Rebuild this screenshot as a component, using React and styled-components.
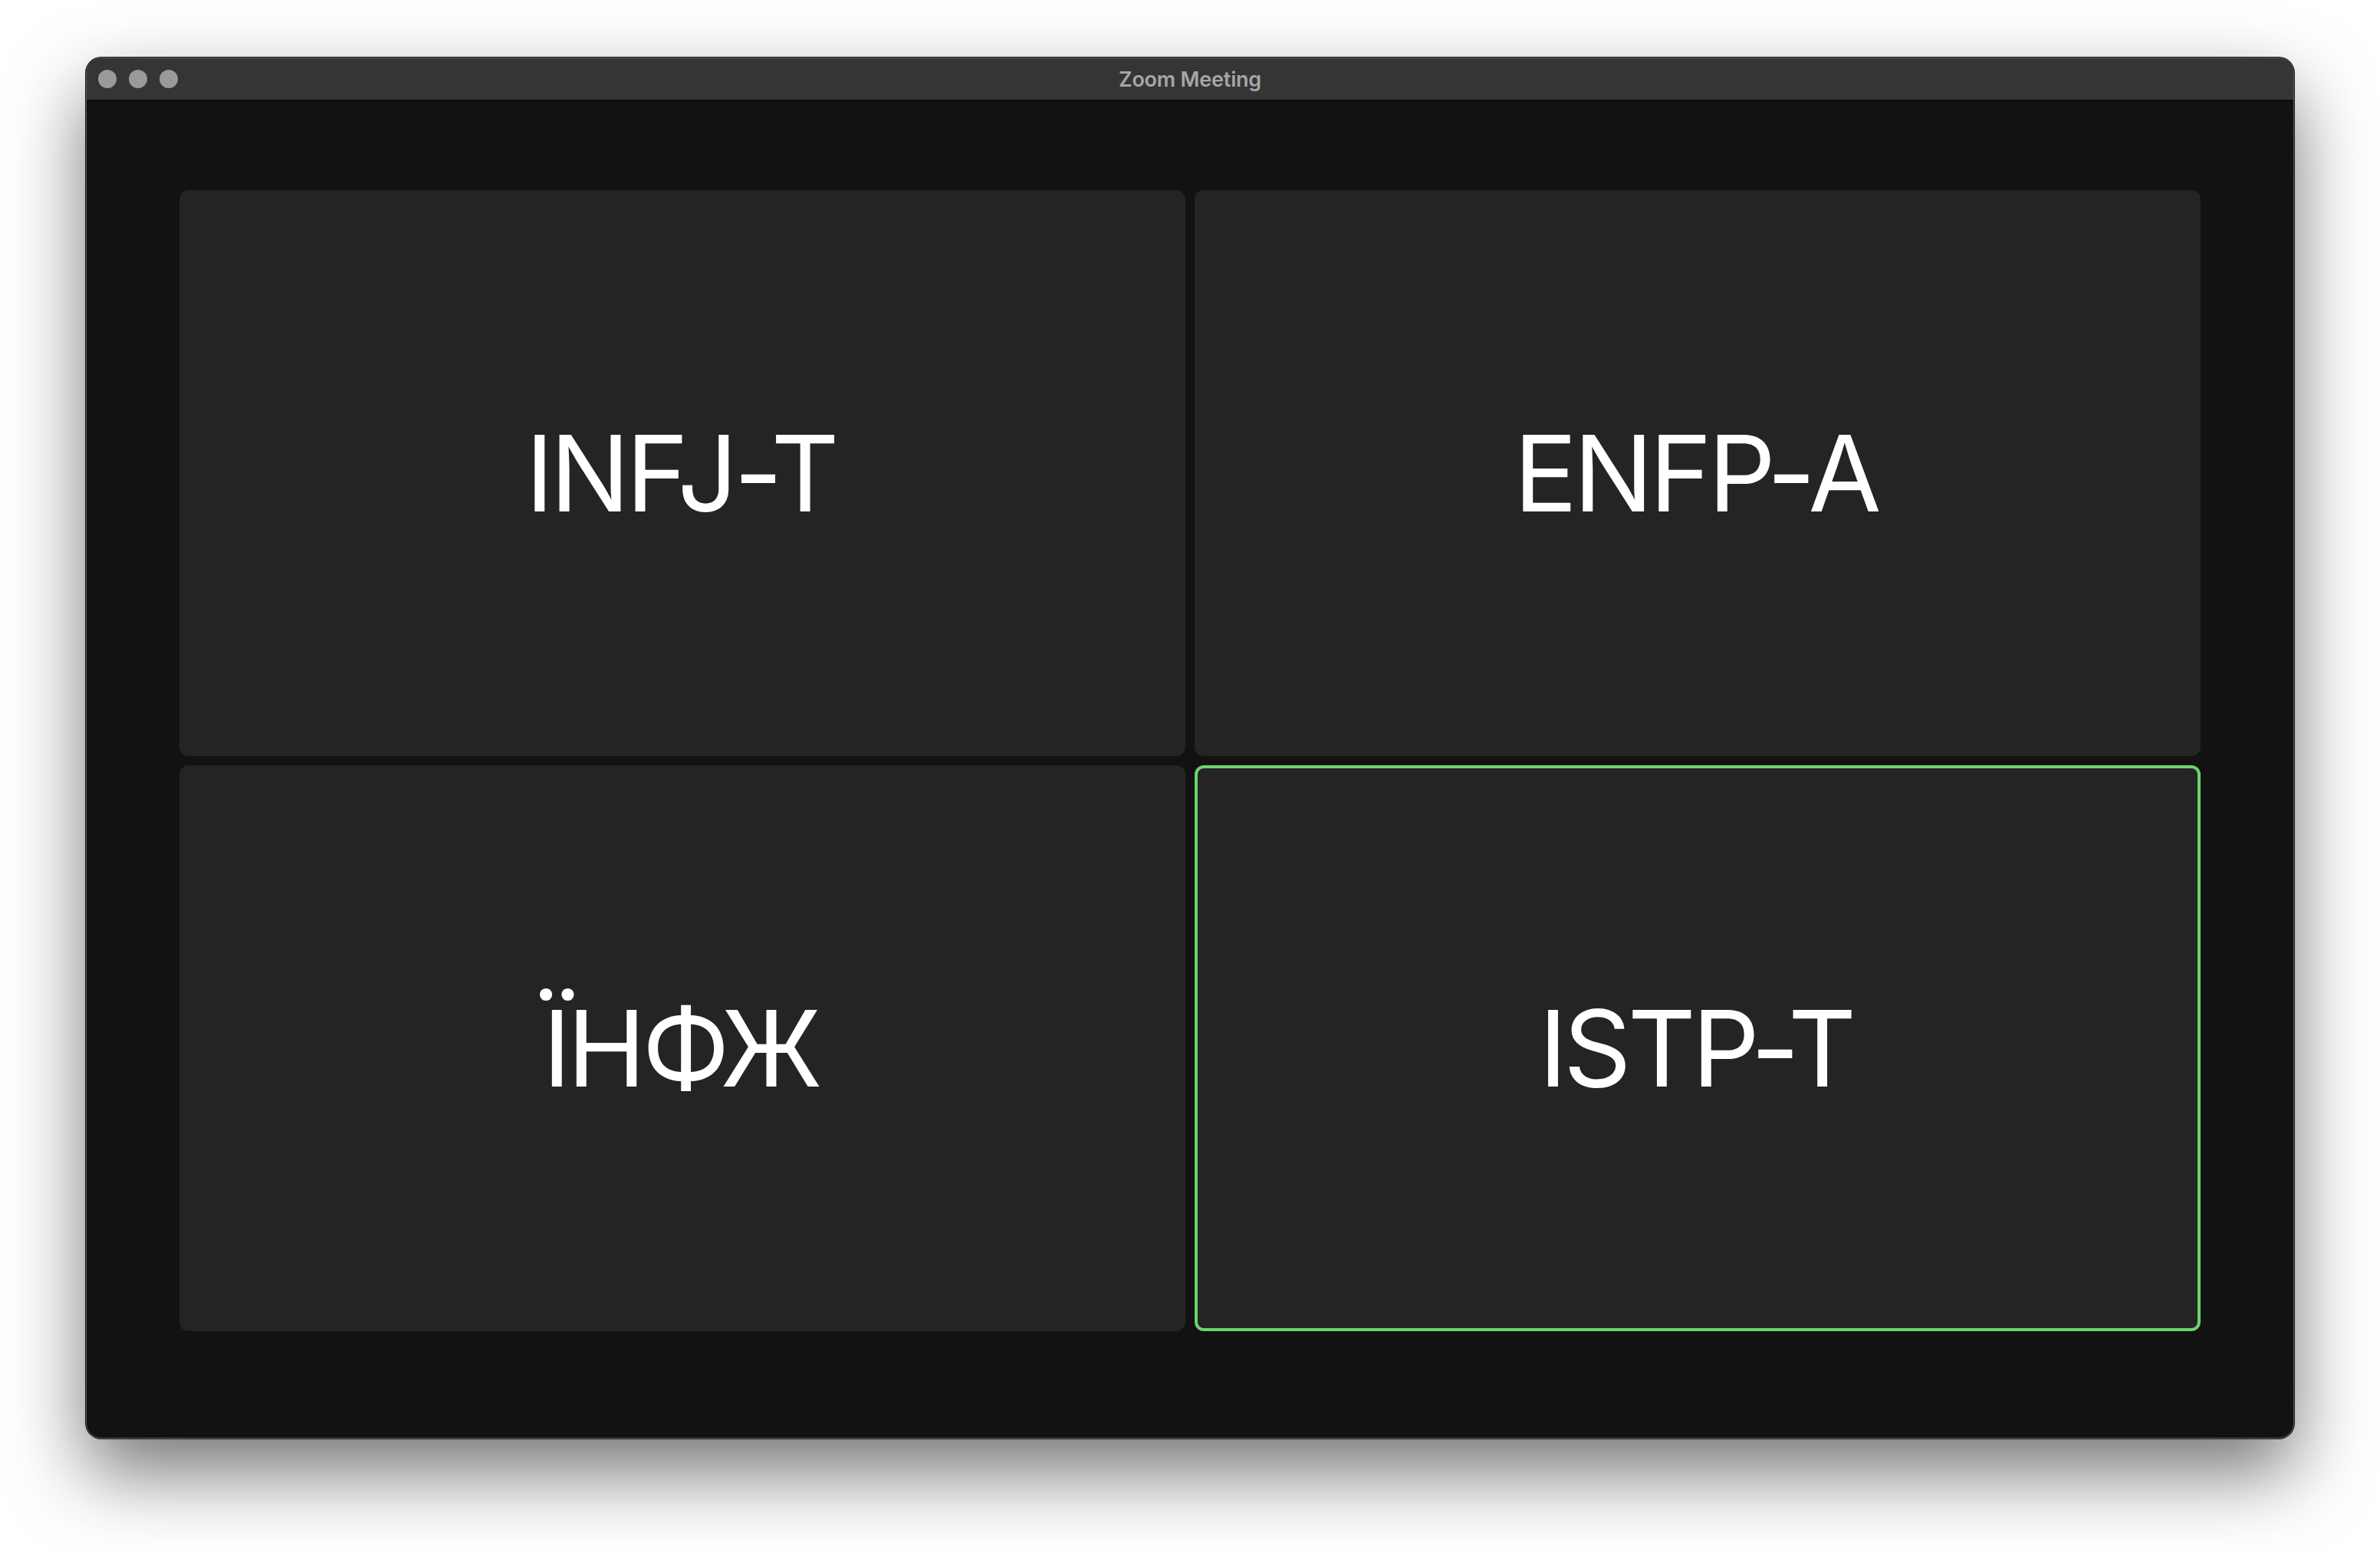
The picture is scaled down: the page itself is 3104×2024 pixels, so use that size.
import React from "react"
import styled, { createGlobalStyle } from "styled-components"

const GlobalStyle = createGlobalStyle`
  html, body {
    margin: 0;
    padding: 0;
    background: #ffffff;
  }
  body {
    font-family: Inter, "Noto Sans", "DejaVu Sans", sans-serif;
  }
`

const participants = [
  { id: 1, label: "INFJ-T" },
  { id: 2, label: "ENFP-A" },
  { id: 3, label: "ЇНФЖ" },
  { id: 4, label: "ISTP-T", speaking: true },
]

const App = () => {
  return (
    <>
      <GlobalStyle />
      <Desktop>
        <Window>
          <TitleBar>
            <Lights>
              <Light />
              <Light />
              <Light />
            </Lights>
            <Title>Zoom Meeting</Title>
            <span />
          </TitleBar>
          <Stage>
            <Gallery>
              {participants.map(p => (
                <Tile key={p.id} $active={p.speaking}>
                  <Name>{p.label}</Name>
                </Tile>
              ))}
            </Gallery>
          </Stage>
        </Window>
      </Desktop>
    </>
  )
}

const Desktop = styled.div`
  width: 3104px;
  height: 2024px;
  padding: 75px 0 0 112px;
  box-sizing: border-box;
  overflow: hidden;
`

const Window = styled.div`
  width: 2880px;
  height: 1801px;
  box-sizing: border-box;
  display: flex;
  flex-direction: column;
  border: 1px solid #5e5e5e;
  border-radius: 20px;
  overflow: hidden;
  background: #121212;
  box-shadow: 0 0 0 1px #1a1a1a, 0 44px 100px rgba(0, 0, 0, 0.55);
`

const TitleBar = styled.div`
  height: 54px;
  flex-shrink: 0;
  display: grid;
  grid-template-columns: 1fr auto 1fr;
  align-items: center;
  background: #353535;
  border-bottom: 2px solid #0c0c0c;
  padding: 0 15px;
`

const Lights = styled.div`
  display: flex;
  gap: 16px;
`

const Light = styled.span`
  width: 24px;
  height: 24px;
  border-radius: 50%;
  background: #9a9a9a;
`

const Title = styled.div`
  color: #a6a6a6;
  font-size: 27px;
  font-weight: 600;
  letter-spacing: -0.2px;
`

const Stage = styled.div`
  flex: 1;
  padding: 116px 121px 139px;
  box-sizing: border-box;
  display: flex;
`

const Gallery = styled.div`
  flex: 1;
  display: grid;
  grid-template-columns: 1fr 1fr;
  grid-template-rows: 1fr 1fr;
  gap: 12px;
`

const Tile = styled.div`
  background: #242424;
  border-radius: 12px;
  border: 4px solid ${props => (props.$active ? "#6bd46b" : "transparent")};
  box-sizing: border-box;
  display: flex;
  align-items: center;
  justify-content: center;
`

const Name = styled.span`
  color: #ffffff;
  font-size: 138px;
  font-weight: 400;
  line-height: 1;
  letter-spacing: -5px;
  padding-right: 5px;
`

export default App
